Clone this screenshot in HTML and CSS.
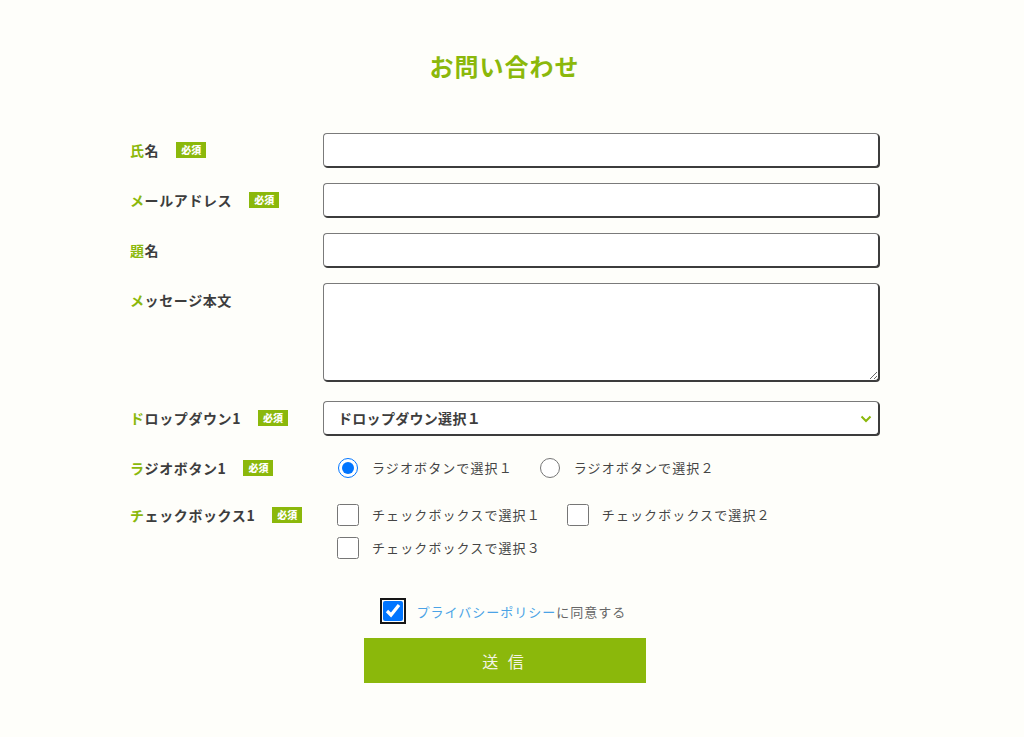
FILE: index.html
```html
<!DOCTYPE html>
<html lang="ja">
<head>
    <meta charset="UTF-8">
    <meta name="viewport" content="width=device-width, initial-scale=1.0">
    <link rel="stylesheet" href="styles.css">
    <title>お問い合わせ</title>
</head>
<body>
    <div class="page">
        <form class="contact">
            <h1 class="contact-title">お問い合わせ</h1>

            <div class="form-row">
                <label class="form-label" for="name"><span class="accent">氏</span>名<span class="badge">必須</span></label>
                <div class="form-field"><input id="name" class="text-input" type="text"></div>
            </div>
            <div class="form-row">
                <label class="form-label" for="email"><span class="accent">メ</span>ールアドレス<span class="badge">必須</span></label>
                <div class="form-field"><input id="email" class="text-input" type="email"></div>
            </div>
            <div class="form-row">
                <label class="form-label" for="subject"><span class="accent">題</span>名</label>
                <div class="form-field"><input id="subject" class="text-input" type="text"></div>
            </div>
            <div class="form-row">
                <label class="form-label" for="message"><span class="accent">メ</span>ッセージ本文</label>
                <div class="form-field"><textarea id="message" class="text-input textarea"></textarea></div>
            </div>
            <div class="form-row">
                <label class="form-label" for="dropdown"><span class="accent">ド</span>ロップダウン1<span class="badge">必須</span></label>
                <div class="form-field">
                    <div class="select-wrap">
                        <select id="dropdown" class="text-input select">
                            <option>ドロップダウン選択１</option>
                            <option>ドロップダウン選択２</option>
                        </select>
                        <svg class="select-arrow" width="12" height="8" viewBox="0 0 12 8"><path d="M1.5 1.5 L6 6 L10.5 1.5" fill="none" stroke="#8bb80b" stroke-width="2"/></svg>
                    </div>
                </div>
            </div>
            <div class="form-row form-row-tight">
                <span class="form-label"><span class="accent">ラ</span>ジオボタン1<span class="badge">必須</span></span>
                <div class="form-field choices">
                    <label class="choice"><input type="radio" name="radio1" class="radio" checked>ラジオボタンで選択１</label>
                    <label class="choice"><input type="radio" name="radio1" class="radio">ラジオボタンで選択２</label>
                </div>
            </div>
            <div class="form-row">
                <span class="form-label"><span class="accent">チ</span>ェックボックス1<span class="badge">必須</span></span>
                <div class="form-field choices">
                    <label class="choice"><input type="checkbox" class="check">チェックボックスで選択１</label>
                    <label class="choice"><input type="checkbox" class="check">チェックボックスで選択２</label>
                    <label class="choice"><input type="checkbox" class="check">チェックボックスで選択３</label>
                </div>
            </div>

            <div class="agree">
                <label class="agree-label"><input type="checkbox" class="agree-check" checked><a class="agree-link" href="#">プライバシーポリシー</a>に同意する</label>
            </div>
            <div class="submit-row">
                <button type="button" class="submit">送 信</button>
            </div>
        </form>
    </div>
</body>
</html>
```

FILE: styles.css
```css
body {
    margin: 0;
    background: #fefefa;
    font-family: "Noto Sans CJK JP", "Noto Sans", sans-serif;
    color: #3d3d3d;
}

.page {
    width: 1009px;
}

.contact {
    width: 749px;
    margin: 0 auto;
    padding-top: 48px;
}

.contact-title {
    margin: 0 0 49px;
    text-align: center;
    font-size: 24px;
    line-height: 36px;
    letter-spacing: 1px;
    font-weight: bold;
    color: #8bb80b;
}

.form-row {
    display: grid;
    grid-template-columns: 193px 1fr;
    margin-bottom: 16px;
}

.form-row-tight {
    margin-bottom: 13px;
}

.form-label {
    display: flex;
    align-items: flex-start;
    font-size: 14px;
    line-height: 34px;
    font-weight: bold;
    letter-spacing: 0.6px;
    color: #3d3d3d;
}

.accent {
    color: #8bb80b;
}

.badge {
    display: inline-block;
    margin: 9px 0 0 17px;
    padding: 0 5px;
    height: 16px;
    line-height: 16px;
    font-size: 10px;
    font-weight: 900;
    letter-spacing: 0;
    color: #fff;
    background: #8bb80b;
}

.text-input {
    display: block;
    width: 100%;
    height: 34px;
    box-sizing: border-box;
    margin: 0;
    border: 1px solid #7a7a7a;
    border-right-color: #3c3c3c;
    border-bottom-color: #3c3c3c;
    border-radius: 4px;
    box-shadow: 1px 1px 0 #3c3c3c;
    background: #fff;
    font-family: inherit;
    font-size: 14px;
    outline: none;
}

.textarea {
    height: 98px;
    resize: vertical;
    margin-bottom: 4px;
}

.select-wrap {
    position: relative;
}

.select {
    appearance: none;
    padding: 0 36px 0 14px;
    font-weight: bold;
    letter-spacing: 0.3px;
    color: #3d3d3d;
}

.select-arrow {
    position: absolute;
    right: 7px;
    top: 14px;
    pointer-events: none;
}

.choices {
    display: flex;
    flex-wrap: wrap;
    padding-left: 14px;
}

.choice {
    display: flex;
    align-items: center;
    height: 33px;
    margin-right: 26px;
    font-size: 13px;
    letter-spacing: 1.1px;
    color: #454545;
    cursor: pointer;
}

.radio {
    width: 20px;
    height: 20px;
    margin: 0 14px 0 1px;
}

.check {
    width: 22px;
    height: 22px;
    margin: 0 13px 0 0;
}

.agree {
    display: flex;
    justify-content: center;
    padding-top: 16px;
}

.agree-label {
    display: flex;
    align-items: center;
    height: 30px;
    font-size: 13px;
    letter-spacing: 1px;
    color: #666;
}

.agree-check {
    width: 20px;
    height: 20px;
    margin: 0 14px 0 0;
    outline: 2px solid #161616;
    outline-offset: 1px;
    border-radius: 3px;
}

.agree-link {
    color: #4ba3e6;
    text-decoration: none;
}

.submit-row {
    display: flex;
    justify-content: center;
    padding-top: 12px;
}

.submit {
    width: 282px;
    height: 45px;
    border: none;
    background: #8bb80b;
    color: #f4f4e6;
    font-family: inherit;
    font-size: 16px;
    letter-spacing: 3px;
    cursor: pointer;
}
```
